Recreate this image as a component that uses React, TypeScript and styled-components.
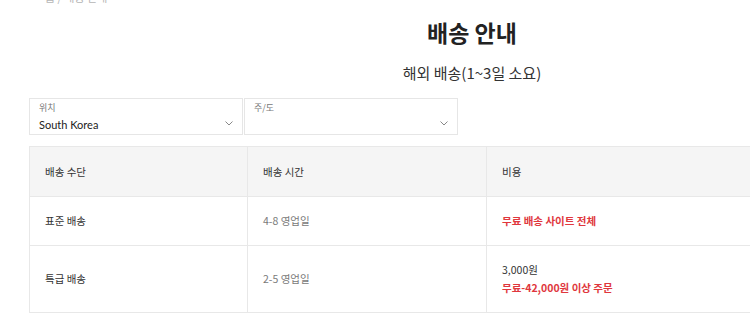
import React, { FC } from 'react';
import styled, { createGlobalStyle } from 'styled-components';

const GlobalStyle = createGlobalStyle`
  html, body {
    margin: 0;
    padding: 0;
    background: #ffffff;
    overflow: hidden;
  }
  body {
    font-family: 'Noto Sans CJK KR', 'Noto Sans', sans-serif;
    color: #333333;
  }
`;

const Page = styled.div`
  width: 886px;
  padding-left: 29px;
`;

const Breadcrumb = styled.div`
  margin-top: -10px;
  padding-left: 16px;
  height: 15px;
  font-size: 11px;
  line-height: 15px;
  color: #b5b5b5;
`;

const Title = styled.h1`
  margin: 11px 0 0;
  text-align: center;
  font-size: 23px;
  font-weight: 700;
  line-height: 32px;
  color: #222222;
`;

const SubTitle = styled.h2`
  margin: 15px 0 0;
  text-align: center;
  font-size: 15px;
  font-weight: 400;
  line-height: 20px;
  color: #333333;
`;

const SelectRow = styled.div`
  display: flex;
  gap: 1px;
  margin-top: 15px;
`;

const SelectBox = styled.div`
  position: relative;
  width: 214px;
  height: 37px;
  box-sizing: border-box;
  border: 1px solid #e6e6e6;
  padding: 3px 9px 0;
`;

const SelectLabel = styled.div`
  font-size: 9px;
  line-height: 12px;
  color: #777777;
`;

const SelectValue = styled.div`
  margin-top: 3px;
  font-family: 'Lato', 'Noto Sans', sans-serif;
  font-size: 11px;
  line-height: 16px;
  color: #222222;
  height: 16px;
`;

const Chevron = styled.svg`
  position: absolute;
  right: 9px;
  bottom: 8px;
  width: 8px;
  height: 5px;
`;

const Table = styled.div`
  margin-top: 11px;
  width: 886px;
  border: 1px solid #e8e8e8;
  border-right: none;
  display: grid;
  grid-template-columns: 217px 239px 1fr;
`;

const Cell = styled.div<{ head?: boolean; h: number; first?: boolean }>`
  height: ${({ h }) => h}px;
  box-sizing: border-box;
  background: ${({ head }) => (head ? '#f5f5f5' : '#ffffff')};
  border-top: ${({ first }) => (first ? 'none' : '1px solid #e8e8e8')};
  border-left: 1px solid #e8e8e8;
  &:nth-child(3n + 1) {
    border-left: none;
  }
  padding-left: 15px;
  display: flex;
  flex-direction: column;
  justify-content: center;
  font-size: 10.5px;
  line-height: 18px;
`;

const Text = styled.span<{ tone?: 'dark' | 'grey' | 'red' }>`
  color: ${({ tone }) =>
    tone === 'red' ? '#e0373d' : tone === 'grey' ? '#7a7a7a' : '#333333'};
  font-weight: ${({ tone }) => (tone === 'red' ? 700 : 400)};
`;

interface SelectProps {
  label: string;
  value?: string;
}

const Select: FC<SelectProps> = ({ label, value }) => (
  <SelectBox>
    <SelectLabel>{label}</SelectLabel>
    <SelectValue>{value}</SelectValue>
    <Chevron viewBox="0 0 8 5">
      <path d="M0.5 0.5 L4 4 L7.5 0.5" fill="none" stroke="#888" strokeWidth="1" />
    </Chevron>
  </SelectBox>
);

const App: FC = () => {
  return (
    <>
      <GlobalStyle />
      <Page>
        <Breadcrumb>홈 / 배송 안내</Breadcrumb>
        <Title>배송 안내</Title>
        <SubTitle>해외 배송(1~3일 소요)</SubTitle>
        <SelectRow>
          <Select label="위치" value="South Korea" />
          <Select label="주/도" />
        </SelectRow>
        <Table>
          <Cell head first h={49}><Text>배송 수단</Text></Cell>
          <Cell head first h={49}><Text>배송 시간</Text></Cell>
          <Cell head first h={49}><Text>비용</Text></Cell>

          <Cell h={49}><Text>표준 배송</Text></Cell>
          <Cell h={49}><Text tone="grey">4-8 영업일</Text></Cell>
          <Cell h={49}><Text tone="red">무료 배송 사이트 전체</Text></Cell>

          <Cell h={67}><Text>특급 배송</Text></Cell>
          <Cell h={67}><Text tone="grey">2-5 영업일</Text></Cell>
          <Cell h={67}>
            <Text>3,000원</Text>
            <Text tone="red">무료-42,000원 이상 주문</Text>
          </Cell>
        </Table>
      </Page>
    </>
  );
};

export default App;
